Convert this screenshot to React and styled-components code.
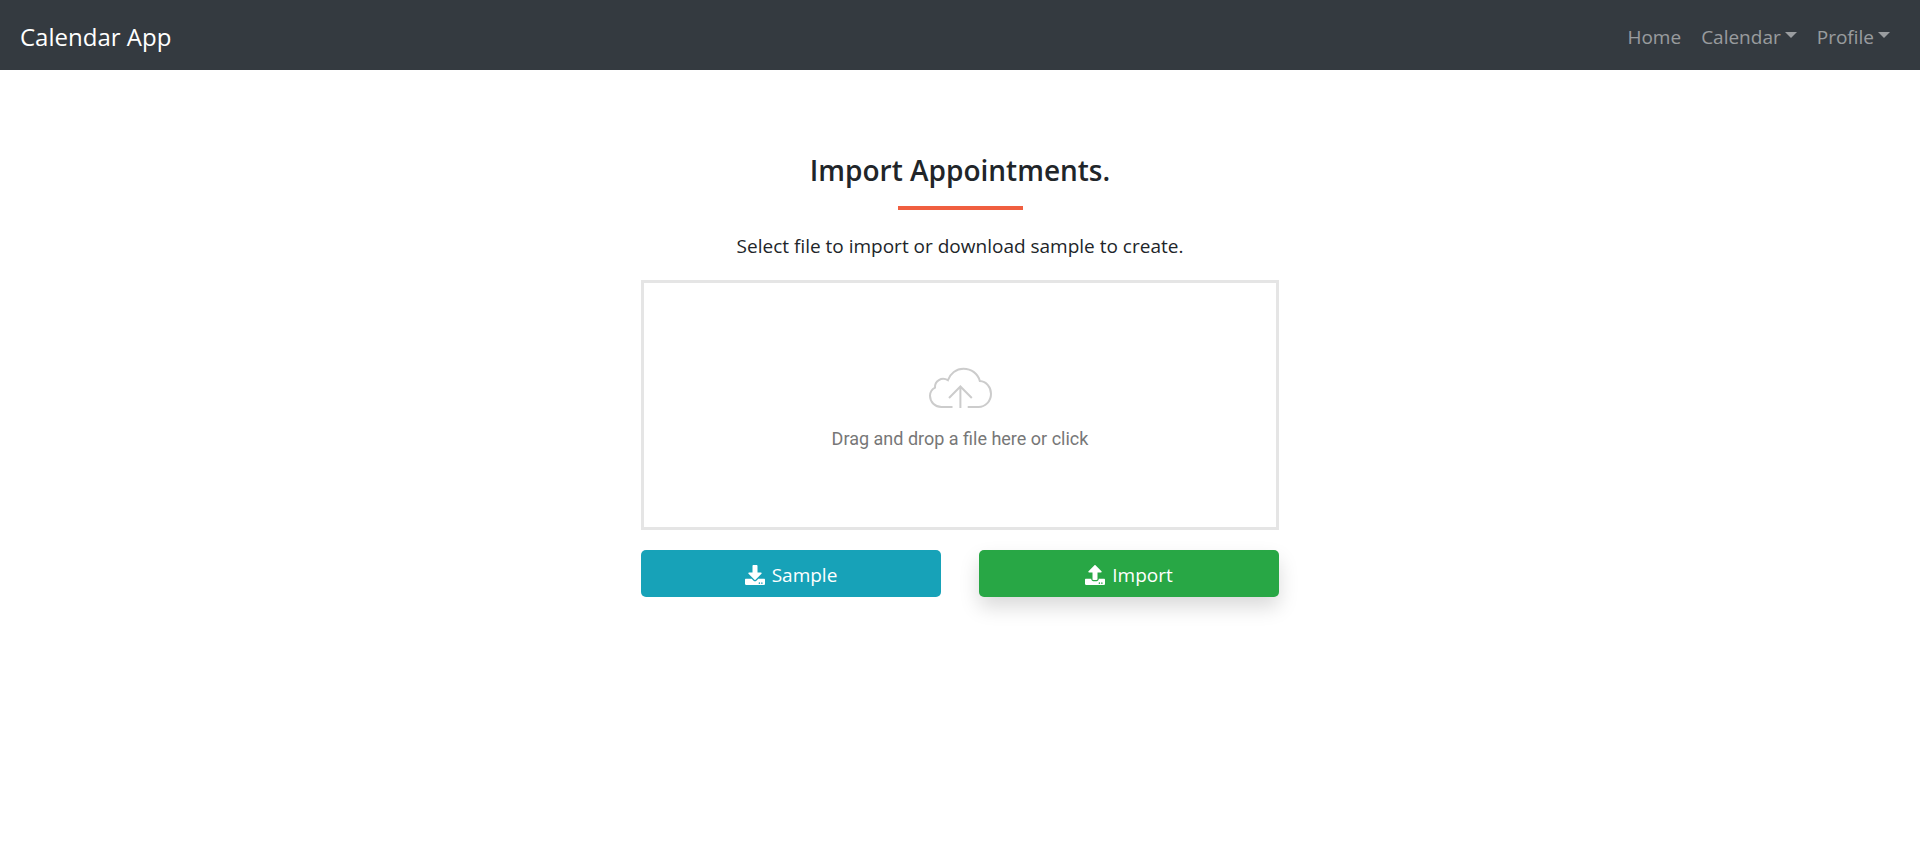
import React from 'react';
import styled, { createGlobalStyle } from 'styled-components';
import { FaDownload, FaUpload } from 'react-icons/fa';

const GlobalStyle = createGlobalStyle`
  *, *::before, *::after { box-sizing: border-box; }
  body {
    margin: 0;
    background: #fff;
    color: #212529;
    font-family: "Segoe UI", "Open Sans", "Noto Sans", sans-serif;
    font-size: 19px;
    line-height: 30px;
  }
`;

const Navbar = styled.nav`
  display: flex;
  align-items: center;
  justify-content: space-between;
  min-height: 70px;
  padding: 12px 20px 8px;
  background: #343a40;
`;

const Brand = styled.a`
  color: #fff;
  font-size: 24px;
  line-height: 38px;
  text-decoration: none;
`;

const NavList = styled.ul`
  display: flex;
  margin: 0;
  padding: 0;
  list-style: none;
`;

const NavLink = styled.a`
  display: flex;
  align-items: center;
  gap: 4px;
  padding: 10px;
  color: rgba(255, 255, 255, 0.5);
  text-decoration: none;
`;

const Caret = styled.span`
  border-top: 6px solid;
  border-right: 6px solid transparent;
  border-left: 6px solid transparent;
  margin-bottom: 4px;
`;

const Main = styled.main`
  display: flex;
  flex-direction: column;
  align-items: center;
  width: 100%;
  max-width: 638px;
  margin: 0 auto;
  padding: 80px 0;
`;

const Title = styled.h1`
  margin: 0;
  font-size: 28px;
  font-weight: 600;
  line-height: 40px;
`;

const Rule = styled.hr`
  width: 125px;
  height: 4px;
  margin: 16px 0 21px;
  border: 0;
  background: #f05f40;
`;

const Lead = styled.p`
  margin: 0 0 19px;
`;

const DropZone = styled.label`
  position: relative;
  display: flex;
  flex-direction: column;
  align-items: center;
  justify-content: center;
  gap: 16px;
  width: 100%;
  height: 250px;
  padding-top: 10px;
  border: 3px solid #e5e5e5;
  color: #777;
  font-family: Roboto, sans-serif;
  font-size: 18px;
  line-height: 28px;
  cursor: pointer;
`;

const FileInput = styled.input`
  position: absolute;
  inset: 0;
  width: 100%;
  height: 100%;
  opacity: 0;
  cursor: pointer;
`;

const Actions = styled.div`
  display: flex;
  gap: 38px;
  width: 100%;
  margin-top: 20px;
`;

const Button = styled.button`
  display: flex;
  flex: 1;
  align-items: center;
  justify-content: center;
  gap: 7px;
  height: 47px;
  padding: 2px 15px 0;
  border: 0;
  border-radius: 5px;
  background: ${({ $color }) => $color};
  box-shadow: ${({ $raised }) => ($raised ? '0 10px 20px rgba(0, 0, 0, 0.15)' : 'none')};
  color: #fff;
  font: inherit;
  cursor: pointer;
`;

function CloudIcon() {
  return (
    <svg width="64" height="42" viewBox="0 0 64 42" fill="none" stroke="#ccc" strokeWidth="2" aria-hidden="true">
      <path d="M24.5 40H13.5C7 40 2 35 2 28.8C2 25.2 4 22.2 7 20.6C6.6 14 13.5 9.5 19.9 13.2C22.2 6.5 28.2 1.8 35.5 1.8C43.4 1.8 50 6.7 51.8 14C58.4 14.5 63 20 63 26.8C63 34.2 57.5 40 50.5 40H39.7" />
      <path d="M32.4 41V19.5M21 31L32.4 19.5L43.8 31" />
    </svg>
  );
}

export default function App() {
  return (
    <>
      <GlobalStyle />
      <Navbar>
        <Brand href="#">Calendar App</Brand>
        <NavList>
          <li><NavLink href="#">Home</NavLink></li>
          <li><NavLink href="#calendar">Calendar<Caret /></NavLink></li>
          <li><NavLink href="#profile">Profile<Caret /></NavLink></li>
        </NavList>
      </Navbar>
      <Main>
        <Title>Import Appointments.</Title>
        <Rule />
        <Lead>Select file to import or download sample to create.</Lead>
        <DropZone>
          <CloudIcon />
          <span>Drag and drop a file here or click</span>
          <FileInput type="file" />
        </DropZone>
        <Actions>
          <Button type="button" $color="#17a2b8"><FaDownload size={20} />Sample</Button>
          <Button type="button" $color="#28a745" $raised><FaUpload size={20} />Import</Button>
        </Actions>
      </Main>
    </>
  );
}
